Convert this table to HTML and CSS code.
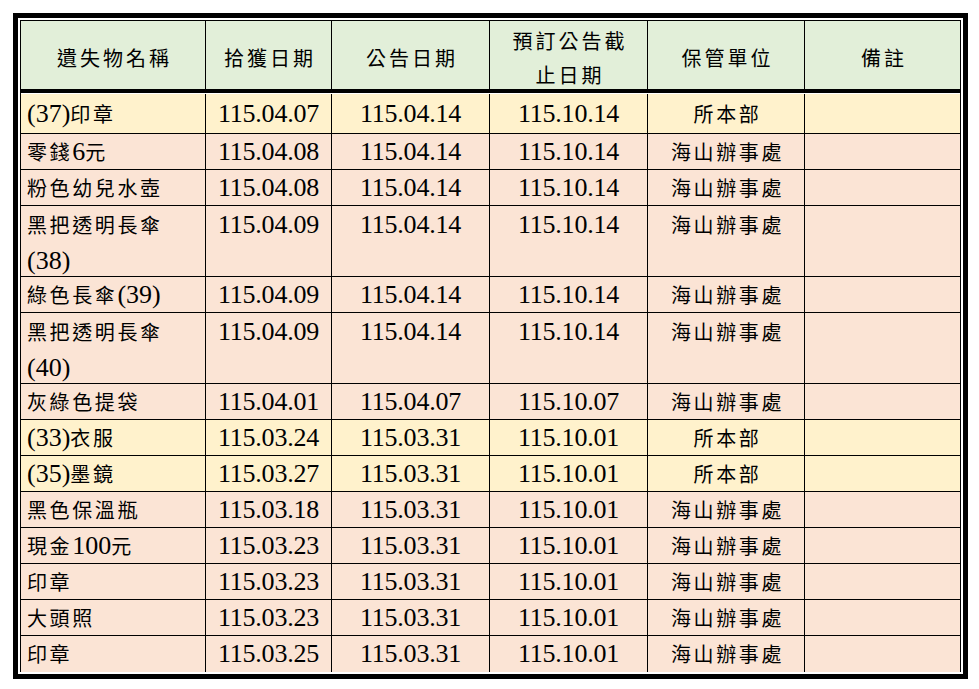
FILE: index.html
```html
<!DOCTYPE html>
<html lang="zh-Hant">
<head>
<meta charset="utf-8">
<title>遺失物招領公告</title>
<link rel="stylesheet" href="styles.css">
</head>
<body>
<div class="frame">
  <div class="sheet">
    <div class="grid head">
      <div class="h"><span>遺失物名稱</span></div>
      <div class="h"><span>拾獲日期</span></div>
      <div class="h"><span>公告日期</span></div>
      <div class="h"><span>預訂公告截<br>止日期</span></div>
      <div class="h"><span>保管單位</span></div>
      <div class="h"><span>備註</span></div>
    </div>
    <div class="grid rows">
      <div class="row y first">
        <div class="c name"><span class="num">(37)</span>印章</div>
        <div class="c date">115.04.07</div><div class="c date">115.04.14</div><div class="c date">115.10.14</div>
        <div class="c unit">所本部</div><div class="c"></div>
      </div>
      <div class="row">
        <div class="c name">零錢<span class="num">6</span>元</div>
        <div class="c date">115.04.08</div><div class="c date">115.04.14</div><div class="c date">115.10.14</div>
        <div class="c unit">海山辦事處</div><div class="c"></div>
      </div>
      <div class="row">
        <div class="c name">粉色幼兒水壺</div>
        <div class="c date">115.04.08</div><div class="c date">115.04.14</div><div class="c date">115.10.14</div>
        <div class="c unit">海山辦事處</div><div class="c"></div>
      </div>
      <div class="row two">
        <div class="c name">黑把透明長傘<br><span class="num">(38)</span></div>
        <div class="c date">115.04.09</div><div class="c date">115.04.14</div><div class="c date">115.10.14</div>
        <div class="c unit">海山辦事處</div><div class="c"></div>
      </div>
      <div class="row">
        <div class="c name">綠色長傘<span class="num">(39)</span></div>
        <div class="c date">115.04.09</div><div class="c date">115.04.14</div><div class="c date">115.10.14</div>
        <div class="c unit">海山辦事處</div><div class="c"></div>
      </div>
      <div class="row two">
        <div class="c name">黑把透明長傘<br><span class="num">(40)</span></div>
        <div class="c date">115.04.09</div><div class="c date">115.04.14</div><div class="c date">115.10.14</div>
        <div class="c unit">海山辦事處</div><div class="c"></div>
      </div>
      <div class="row">
        <div class="c name">灰綠色提袋</div>
        <div class="c date">115.04.01</div><div class="c date">115.04.07</div><div class="c date">115.10.07</div>
        <div class="c unit">海山辦事處</div><div class="c"></div>
      </div>
      <div class="row y">
        <div class="c name"><span class="num">(33)</span>衣服</div>
        <div class="c date">115.03.24</div><div class="c date">115.03.31</div><div class="c date">115.10.01</div>
        <div class="c unit">所本部</div><div class="c"></div>
      </div>
      <div class="row y">
        <div class="c name"><span class="num">(35)</span>墨鏡</div>
        <div class="c date">115.03.27</div><div class="c date">115.03.31</div><div class="c date">115.10.01</div>
        <div class="c unit">所本部</div><div class="c"></div>
      </div>
      <div class="row">
        <div class="c name">黑色保溫瓶</div>
        <div class="c date">115.03.18</div><div class="c date">115.03.31</div><div class="c date">115.10.01</div>
        <div class="c unit">海山辦事處</div><div class="c"></div>
      </div>
      <div class="row">
        <div class="c name">現金<span class="num">100</span>元</div>
        <div class="c date">115.03.23</div><div class="c date">115.03.31</div><div class="c date">115.10.01</div>
        <div class="c unit">海山辦事處</div><div class="c"></div>
      </div>
      <div class="row">
        <div class="c name">印章</div>
        <div class="c date">115.03.23</div><div class="c date">115.03.31</div><div class="c date">115.10.01</div>
        <div class="c unit">海山辦事處</div><div class="c"></div>
      </div>
      <div class="row">
        <div class="c name">大頭照</div>
        <div class="c date">115.03.23</div><div class="c date">115.03.31</div><div class="c date">115.10.01</div>
        <div class="c unit">海山辦事處</div><div class="c"></div>
      </div>
      <div class="row last">
        <div class="c name">印章</div>
        <div class="c date">115.03.25</div><div class="c date">115.03.31</div><div class="c date">115.10.01</div>
        <div class="c unit">海山辦事處</div><div class="c"></div>
      </div>
    </div>
  </div>
</div>
</body>
</html>
```

FILE: styles.css
```css
body {
  margin: 13px 0 0 13px;
  background: #ffffff;
  color: #000000;
  font-family: "Noto Sans CJK TC", "Noto Sans CJK JP", sans-serif;
  font-size: 20px;
}

.frame {
  width: 955px;
  box-sizing: border-box;
  border: 5px solid #000000;
  padding: 2px;
  background: #ffffff;
}

.sheet {
  border-left: 1px solid #000000;
  border-right: 1px solid #000000;
}

.grid {
  display: grid;
  grid-template-columns: 185px 126px 158px 158px 157px 155px;
}

.head {
  grid-template-rows: 68px;
  border-top: 1px solid #000000;
  border-bottom: 4px solid #000000;
  margin-bottom: 1px;
  background: #e2efd9;
}

.h {
  display: flex;
  align-items: center;
  justify-content: center;
  text-align: center;
  box-sizing: border-box;
  padding-top: 5px;
  padding-left: 3px;
  line-height: 34px;
  letter-spacing: 3px;
  border-right: 1px solid #000000;
}

.h:last-child {
  border-right: none;
}

.rows {
  grid-template-rows: 40px 36px 36px 71px 36px 71px 36px repeat(7, 36px);
}

.row {
  display: contents;
}

.c {
  box-sizing: border-box;
  background: #fbe4d5;
  border-right: 1px solid #000000;
  border-bottom: 1px solid #000000;
  line-height: 35px;
  letter-spacing: 2.6px;
  white-space: nowrap;
}

.row > .c:last-child {
  border-right: none;
}

.row.y > .c {
  background: #fff2cc;
}

.row.first > .c {
  line-height: 39px;
}

.row.two > .c {
  line-height: 36px;
  padding-top: 1px;
}

.row.last > .c {
  border-bottom: none;
  line-height: 36px;
}

.name {
  padding-left: 6px;
  text-align: left;
}

.unit {
  text-align: center;
  padding-left: 3px;
}

.date {
  text-align: center;
  font-family: "Liberation Serif", serif;
  font-size: 26px;
  letter-spacing: -0.2px;
}

.num {
  font-family: "Liberation Serif", serif;
  font-size: 26px;
  line-height: 1;
  letter-spacing: 0;
}
```
